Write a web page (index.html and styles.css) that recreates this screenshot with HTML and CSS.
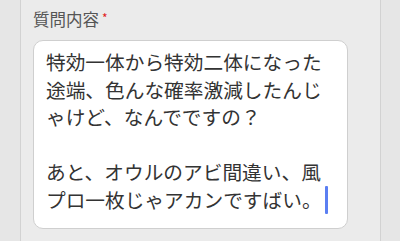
FILE: index.html
```html
<!DOCTYPE html>
<html lang="ja">
<head>
  <meta charset="UTF-8">
  <meta name="viewport" content="width=device-width, initial-scale=1.0">
  <title>質問内容</title>
  <link rel="stylesheet" href="styles.css">
</head>
<body>
  <div class="panel">
    <label class="field-label">質問内容<span class="required">*</span></label>
    <div class="textbox">
      特効一体から特効二体になった<br>
      途端、色んな確率激減したんじ<br>
      ゃけど、なんでですの？<br>
      <br>
      あと、オウルのアビ間違い、風<br>
      プロ一枚じゃアカンですばい。<span class="caret"></span>
    </div>
  </div>
</body>
</html>
```

FILE: styles.css
```css
body {
  margin: 0;
  background-color: #e6e6e6;
  font-family: "Noto Sans CJK JP", "Noto Sans", sans-serif;
  color: #333;
}
.panel {
  margin: 0 19px 0 20px;
  height: 241px;
  box-sizing: border-box;
  background-color: #ebebeb;
  border-left: 1px solid #d2d2d2;
  border-right: 1px solid #d2d2d2;
  padding: 7px 12px 0 12px;
}
.field-label {
  display: block;
  font-size: 16.5px;
  line-height: 24px;
  color: #555;
}
.required {
  color: #e02020;
  font-size: 12px;
  vertical-align: top;
  margin-left: 3px;
  position: relative;
  top: -1px;
}
.textbox {
  margin-top: 9px;
  width: 315px;
  height: 189px;
  box-sizing: border-box;
  background-color: #fff;
  border: 1px solid #cfcfcf;
  border-radius: 10px;
  padding: 7px 0 0 12px;
  font-size: 19.7px;
  line-height: 27.5px;
  color: #333;
  white-space: nowrap;
}
.caret {
  display: inline-block;
  width: 3px;
  height: 28px;
  background-color: #5b7ff2;
  border-radius: 1px;
  margin-left: 3px;
  vertical-align: -6px;
}
```
